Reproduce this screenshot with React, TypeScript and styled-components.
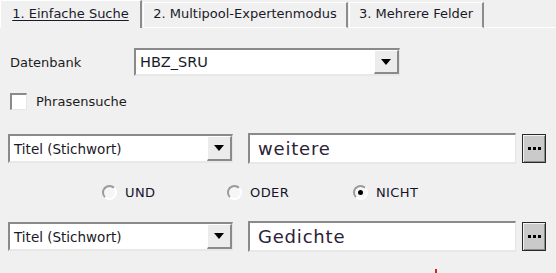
import styled, { createGlobalStyle } from 'styled-components'

const GlobalStyle = createGlobalStyle`
  body {
    margin: 0;
    background: #f0f0f0;
    font-family: "DejaVu Sans", Verdana, sans-serif;
  }
`

const StyledPage = styled.div`
  position: relative;
  width: 556px;
  height: 273px;
  overflow: hidden;
  background: #f0f0f0;
  color: #1c1c1c;
`

const StyledTabBar = styled.div`
  display: flex;
  align-items: flex-end;
  height: 28px;
`

const StyledTab = styled.div<{ $active?: boolean; $w: number }>`
  box-sizing: border-box;
  width: ${p => p.$w}px;
  height: ${p => (p.$active ? 28 : 26)}px;
  margin-right: 1px;
  display: flex;
  justify-content: center;
  padding-top: ${p => (p.$active ? 5 : 3)}px;
  font-size: 13px;
  color: #1a1a28;
  background: #f0f0f0;
  border-top: 1px solid #ffffff;
  border-left: 1px solid #ffffff;
  border-right: 2px solid #8c8c8c;
  border-bottom: ${p => (p.$active ? 'none' : '1px solid #ffffff')};
  text-decoration: ${p => (p.$active ? 'underline' : 'none')};
  text-underline-offset: 2px;
`

const StyledTabFiller = styled.div`
  flex: 1;
  height: 1px;
  background: #ffffff;
`

const StyledContent = styled.div`
  display: flex;
  flex-direction: column;
  padding: 0 10px 0 8px;
`

const StyledRow = styled.div<{ $mt: number }>`
  display: flex;
  align-items: center;
  margin-top: ${p => p.$mt}px;
`

const StyledLabel = styled.div`
  width: 124px;
  padding-left: 2px;
  font-size: 13px;
`

const StyledSelect = styled.div<{ $w: number; $h: number }>`
  box-sizing: border-box;
  width: ${p => p.$w}px;
  height: ${p => p.$h}px;
  display: flex;
  align-items: center;
  background: #ffffff;
  border-top: 2px solid #8a8a8a;
  border-left: 2px solid #8a8a8a;
  border-right: 1px solid #e4e4e4;
  border-bottom: 2px solid #e8e8e8;
`

const StyledSelectText = styled.div<{ $size: number }>`
  flex: 1;
  padding-left: 4px;
  font-size: ${p => p.$size}px;
  color: #1a1a28;
`

const StyledDropButton = styled.div`
  box-sizing: border-box;
  width: 25px;
  height: 100%;
  display: flex;
  align-items: center;
  justify-content: center;
  background: #ececec;
  border-top: 1px solid #ffffff;
  border-left: 1px solid #ffffff;
  border-right: 2px solid #8a8a8a;
  border-bottom: 2px solid #8a8a8a;
`

const StyledArrow = styled.div`
  width: 0;
  height: 0;
  border-left: 5px solid transparent;
  border-right: 5px solid transparent;
  border-top: 6px solid #000000;
`

const StyledCheckRow = styled.label`
  display: flex;
  align-items: center;
  gap: 9px;
  margin-top: 17px;
  padding-left: 2px;
  font-size: 13px;
`

const StyledCheckbox = styled.div`
  box-sizing: border-box;
  width: 17px;
  height: 17px;
  background: #ffffff;
  border-top: 2px solid #8a8a8a;
  border-left: 2px solid #8a8a8a;
  border-right: 1px solid #e6e6e6;
  border-bottom: 1px solid #e6e6e6;
`

const StyledInput = styled.div`
  box-sizing: border-box;
  width: 268px;
  height: 31px;
  margin-left: 15px;
  display: flex;
  align-items: center;
  padding-left: 8px;
  background: #ffffff;
  border-top: 2px solid #8a8a8a;
  border-left: 2px solid #8a8a8a;
  border-right: 1px solid #e4e4e4;
  border-bottom: 2px solid #e8e8e8;
  font-size: 18px;
  letter-spacing: 0.8px;
  color: #2a2236;
`

const StyledDotsButton = styled.div`
  box-sizing: border-box;
  width: 24px;
  height: 29px;
  margin-left: 6px;
  display: flex;
  align-items: center;
  justify-content: center;
  gap: 2px;
  background: #cacaca;
  border: 1px solid #2a2a2a;
  box-shadow: inset 1px 1px 0 #f2f2f2, inset -1px -1px 0 #8a8a8a;
`

const StyledDot = styled.span`
  width: 3px;
  height: 3px;
  background: #000000;
`

const StyledRadioRow = styled.div`
  display: flex;
  align-items: center;
  margin-top: 20px;
  padding-left: 94px;
  height: 16px;
`

const StyledRadioItem = styled.div<{ $w: number }>`
  width: ${p => p.$w}px;
  display: flex;
  align-items: center;
  gap: 8px;
  font-size: 13px;
  letter-spacing: 0.4px;
  color: #14142a;
`

const StyledRadio = styled.div<{ $checked?: boolean }>`
  box-sizing: border-box;
  width: 15px;
  height: 15px;
  border-radius: 50%;
  background: #f6f6f6;
  border: 2px solid #ffffff;
  border-top-color: #9a9a9a;
  border-left-color: #9a9a9a;
  display: flex;
  align-items: center;
  justify-content: center;
  &::after {
    content: '';
    display: ${p => (p.$checked ? 'block' : 'none')};
    width: 5px;
    height: 5px;
    border-radius: 50%;
    background: #000000;
  }
`

const StyledRedMark = styled.div`
  position: absolute;
  left: 435px;
  top: 269px;
  width: 2px;
  height: 4px;
  background: #e02020;
`

const Dots = () => (
  <StyledDotsButton>
    <StyledDot />
    <StyledDot />
    <StyledDot />
  </StyledDotsButton>
)

const SearchRow = ({ mt, value }: { mt: number; value: string }) => (
  <StyledRow $mt={mt}>
    <StyledSelect $w={225} $h={29}>
      <StyledSelectText $size={13.5}>Titel (Stichwort)</StyledSelectText>
      <StyledDropButton><StyledArrow /></StyledDropButton>
    </StyledSelect>
    <StyledInput>{value}</StyledInput>
    <Dots />
  </StyledRow>
)

export default function App() {
  return (
    <StyledPage>
      <GlobalStyle />
      <StyledTabBar>
        <StyledTab $active $w={142}>1. Einfache Suche</StyledTab>
        <StyledTab $w={205}>2. Multipool-Expertenmodus</StyledTab>
        <StyledTab $w={135}>3. Mehrere Felder</StyledTab>
        <StyledTabFiller />
      </StyledTabBar>
      <StyledContent>
        <StyledRow $mt={20}>
          <StyledLabel>Datenbank</StyledLabel>
          <StyledSelect $w={266} $h={28}>
            <StyledSelectText $size={14.5}>HBZ_SRU</StyledSelectText>
            <StyledDropButton><StyledArrow /></StyledDropButton>
          </StyledSelect>
        </StyledRow>
        <StyledCheckRow>
          <StyledCheckbox />
          Phrasensuche
        </StyledCheckRow>
        <SearchRow mt={23} value="weitere" />
        <StyledRadioRow>
          <StyledRadioItem $w={125}><StyledRadio />UND</StyledRadioItem>
          <StyledRadioItem $w={126}><StyledRadio />ODER</StyledRadioItem>
          <StyledRadioItem $w={100}><StyledRadio $checked />NICHT</StyledRadioItem>
        </StyledRadioRow>
        <SearchRow mt={21} value="Gedichte" />
      </StyledContent>
      <StyledRedMark />
    </StyledPage>
  )
}
